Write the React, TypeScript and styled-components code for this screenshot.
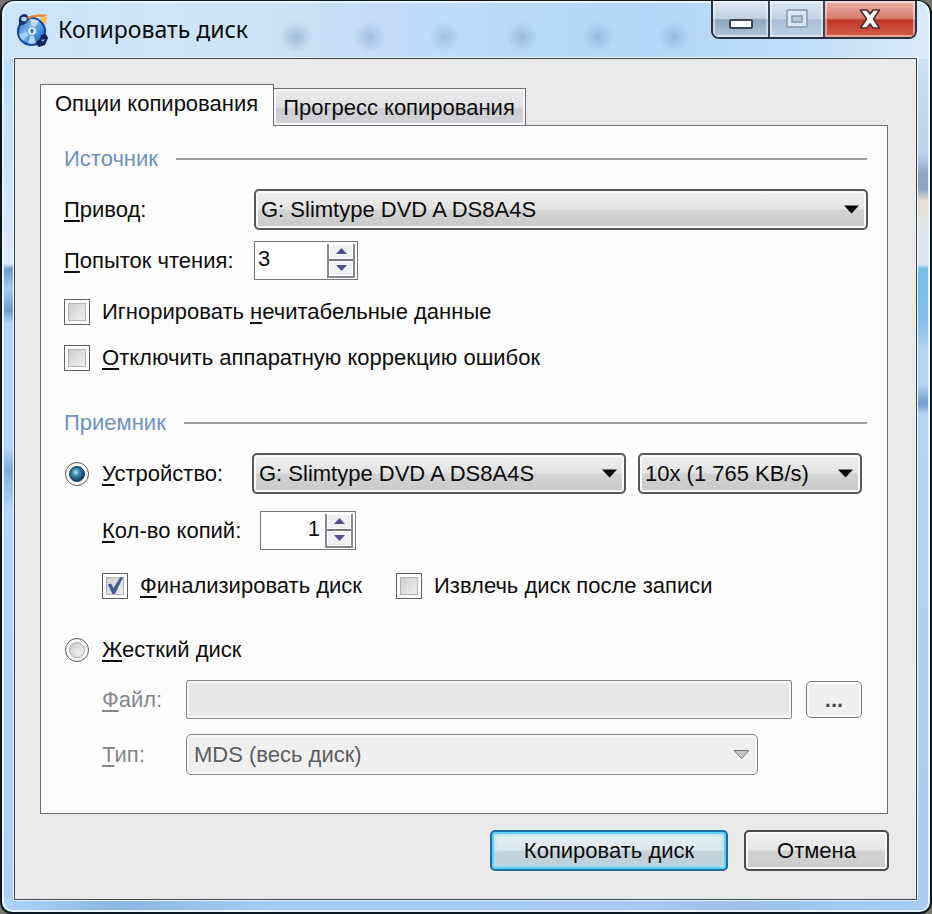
import React, { useId, useState } from "react";
import styled, { createGlobalStyle, css } from "styled-components";

const GlobalStyle = createGlobalStyle`
  *, *::before, *::after { box-sizing: border-box; }
  body {
    margin: 0;
    background: #77776f;
    font-family: "Liberation Sans", Arial, sans-serif;
    font-size: 22px;
    line-height: 28px;
    color: #0c0c0c;
  }
  button, input, select { font: inherit; color: inherit; margin: 0; }
`;

const Window = styled.main`
  display: flex;
  flex-direction: column;
  min-height: 100vh;
  padding: 0 13px 12px 12px;
  border: 2px solid #0d1822;
  border-top-width: 1px;
  border-radius: 14px 14px 12px 12px;
  box-shadow: inset 0 0 0 2px #e9f6ff;
  background:
    linear-gradient(90deg, #b0d6fa 0, #8fb4e0 12%, #a8cdf2 30%, #a9cdf2 65%, #9cc0e6 80%, #a9d0f4 100%) left bottom / 100% 14px no-repeat,
    linear-gradient(180deg, #cfe0ee 0, #b9d2ea 95px, #8ea6c4 115px, #8ea6c4 130px, #e8dfd0 142px, #dbe8f2 180px, #dbe8f2 205px, #74bfee 210px, #86bfe8 262px, #b2d5f6 292px, #b2d5f6 325px, #6f9cc8 345px, #b2d5f6 355px, #a6cdf0 100%) right 0 top 58px / 15px 100% no-repeat,
    linear-gradient(180deg, #bcdcf8 0, #dfe9f8 205px, #6c9ccc 210px, #a4ccf0 230px, #6c9ccc 252px, #b0d6fa 264px, #b0d6fa 390px, #7faedb 410px, #b0d6fa 450px, #a9d0f4 100%) left 0 top 58px / 15px 100% no-repeat,
    linear-gradient(90deg, #cbe5fb 0, #cfe3f6 25%, #c0dbf6 45%, #b3d6f8 70%, #c5e0f8 90%, #dcebf8 100%);
`;

const TitleBar = styled.header`
  display: flex;
  align-items: flex-start;
  height: 57px;
  padding-left: 2px;
  background:
    radial-gradient(circle at 282px 36px, rgba(95, 135, 180, 0.4), transparent 16px),
    radial-gradient(circle at 356px 36px, rgba(95, 135, 180, 0.35), transparent 16px),
    radial-gradient(circle at 430px 36px, rgba(95, 135, 180, 0.3), transparent 16px),
    radial-gradient(circle at 508px 36px, rgba(95, 135, 180, 0.35), transparent 16px),
    radial-gradient(circle at 584px 36px, rgba(95, 135, 180, 0.35), transparent 16px),
    radial-gradient(circle at 660px 36px, rgba(95, 135, 180, 0.35), transparent 16px);
`;

const AppIcon = styled.svg`
  width: 32px;
  height: 34px;
  margin-top: 12px;
`;

const Title = styled.h1`
  flex: 1;
  margin: 14px 0 0 10px;
  font: 400 23px/28px "Noto Sans", sans-serif;
`;

const CaptionButtons = styled.div`
  display: flex;
  height: 38px;
  border: 2px solid #26323e;
  border-top: 0;
  border-radius: 0 0 8px 8px;
  overflow: hidden;
`;

const CaptionButton = styled.button<{ $kind: "normal" | "disabled" | "close" }>`
  display: grid;
  place-items: center;
  width: ${(p) => (p.$kind === "close" ? 92 : 55)}px;
  padding: 0;
  border: 0;
  border-left: ${(p) => (p.$kind === "normal" ? "0" : "2px solid #3a4754")};
  background: ${(p) =>
    p.$kind === "close"
      ? "linear-gradient(#e8b5a9 0, #d9796b 50%, #bf3526 52%, #d5604c 100%)"
      : p.$kind === "disabled"
        ? "linear-gradient(#dbe7f2 0, #c3d3e4 50%, #a9bed4 52%, #bed1e5 100%)"
        : "linear-gradient(#dfe9f3 0, #c0cfdf 50%, #8da4bd 52%, #b1c5da 100%)"};
  box-shadow: inset 0 0 0 2px rgba(255, 255, 255, 0.45);
`;

const Client = styled.div`
  flex: 1;
  display: flex;
  flex-direction: column;
  padding: 25px 28px 27px 25px;
  border: 1px solid #3a4650;
  box-shadow: 0 0 0 1px #eef7fd;
  background: #e9e9e9;
`;

const TabList = styled.div`
  display: flex;
  align-items: flex-end;
`;

const Tab = styled.button<{ $active?: boolean }>`
  position: relative;
  border: 1px solid #6e6e72;
  border-bottom: 0;
  white-space: nowrap;
  ${(p) =>
    p.$active
      ? css`
          z-index: 1;
          height: 42px;
          margin-bottom: -1px;
          padding: 0 15px 4px 14px;
          background: #fdfdfe;
        `
      : css`
          height: 37px;
          padding: 2px 10px 0 9px;
          border-left: 0;
          box-shadow: inset 0 0 0 2px #f6f6f8;
          background: linear-gradient(#ececee 0, #e0e0e3 50%, #cdcdd1 55%, #d4d4d8 100%);
        `}
`;

const Panel = styled.form`
  display: flex;
  flex-direction: column;
  padding: 19px 19px 38px 23px;
  border: 1px solid #6e6e72;
  background: #fdfdfe;
`;

const SectionTitle = styled.h2<{ $spaced?: boolean }>`
  display: flex;
  align-items: center;
  gap: 18px;
  margin: ${(p) => (p.$spaced ? 38 : 0)}px 0 0;
  font-size: 22px;
  font-weight: 400;
  color: #6a93bf;
  &::after {
    content: "";
    flex: 1;
    height: 2px;
    margin-right: 1px;
    background: #9b9b9f;
  }
`;

const Row = styled.div<{ $top: number; $indent?: boolean; $inset?: boolean }>`
  display: flex;
  align-items: center;
  margin-top: ${(p) => p.$top}px;
  padding-left: ${(p) => (p.$indent ? 38 : 0)}px;
  padding-right: ${(p) => (p.$inset ? 6 : 0)}px;
`;

const FieldLabel = styled.label<{ $width: number; $muted?: boolean }>`
  flex: none;
  width: ${(p) => p.$width}px;
  color: ${(p) => (p.$muted ? "#858588" : "inherit")};
  white-space: nowrap;
`;

const Key = styled.span`
  text-decoration: underline;
  text-decoration-thickness: 2px;
  text-underline-offset: 3px;
  text-decoration-skip-ink: none;
`;

const SelectBox = styled.div<{ $width?: number; $gap?: number }>`
  display: grid;
  flex: ${(p) => (p.$width ? `0 0 ${p.$width}px` : "1 1 0")};
  min-width: 0;
  margin-left: ${(p) => p.$gap ?? 0}px;
  > * { grid-area: 1 / 1; }
`;

const NativeSelect = styled.select`
  appearance: none;
  width: 100%;
  height: 41px;
  padding: 0 40px 0 5px;
  border: 2px solid #59595c;
  border-radius: 5px;
  box-shadow: inset 0 0 0 2px #f8f8f8;
  background: linear-gradient(#efefef 0, #e3e3e3 48%, #d3d3d4 52%, #c8c8c9 100%);
  &:disabled {
    border: 1px solid #858588;
    padding-left: 7px;
    background: #efeff0;
    color: #5c5c60;
    opacity: 1;
  }
`;

const SelectArrow = styled.svg<{ $muted?: boolean }>`
  align-self: center;
  justify-self: end;
  width: 15px;
  height: 9px;
  margin-right: 9px;
  fill: ${(p) => (p.$muted ? "#c4c4c8" : "#050505")};
  stroke: ${(p) => (p.$muted ? "#77777b" : "none")};
  pointer-events: none;
`;

const SpinBox = styled.div<{ $width: number }>`
  display: flex;
  align-items: center;
  width: ${(p) => p.$width}px;
  height: 39px;
  padding: 2px;
  border: 1px solid #77777b;
  background: #fff;
`;

const SpinInput = styled.input<{ $end?: boolean }>`
  flex: 1;
  min-width: 0;
  height: 33px;
  padding: 0 5px 3px 1px;
  border: 0;
  outline: 0;
  background: none;
  text-align: ${(p) => (p.$end ? "right" : "left")};
  appearance: textfield;
  &::-webkit-inner-spin-button { appearance: none; margin: 0; }
`;

const SpinButtons = styled.div`
  display: grid;
  grid-template-rows: 15px 17px;
  width: 28px;
  border: 2px solid #88888c;
  border-top: 0;
`;

const SpinButton = styled.button`
  display: grid;
  place-items: center;
  padding: 0;
  border: 0;
  background: #f0f0f4;
  box-shadow: inset 0 0 0 1px #fff;
  & + & { border-top: 2px solid #77777b; }
`;

const Choice = styled.label<{ $gap?: number }>`
  display: flex;
  align-items: center;
  height: 26px;
  margin-left: ${(p) => p.$gap ?? 0}px;
  white-space: nowrap;
`;

const Mark = styled.span`
  display: grid;
  flex: none;
  width: 26px;
  margin-right: 12px;
  place-items: center;
  > * { grid-area: 1 / 1; }
`;

const CheckInput = styled.input`
  appearance: none;
  width: 26px;
  height: 26px;
  padding: 3px;
  border: 1px solid #5e5e62;
  background:
    linear-gradient(135deg, #cbcbcf, #f2f2f3) content-box,
    #fff;
  &::before {
    content: "";
    display: block;
    height: 100%;
    border: 1px solid #b2b2b6;
  }
`;

const RadioInput = styled.input`
  appearance: none;
  width: 24px;
  height: 24px;
  padding: 3px;
  border: 1px solid #55555a;
  border-radius: 50%;
  background: #fbfbfb;
  &::before {
    content: "";
    display: block;
    height: 100%;
    border: 1px solid #b0b0b4;
    border-radius: 50%;
    background: radial-gradient(circle at 65% 70%, #f0f0f0, #c8c8cc);
  }
  &:checked::before {
    border-color: #16344c;
    background: radial-gradient(circle at 42% 38%, #b8e2f0 0, #3f8fb4 28%, #17496b 65%, #0e2c44 100%);
  }
`;

const MarkGlyph = styled.svg`
  width: 18px;
  height: 20px;
  pointer-events: none;
`;

const FileInput = styled.input`
  flex: 1;
  min-width: 0;
  height: 39px;
  border: 1px solid #858588;
  border-radius: 2px;
  box-shadow: inset 0 0 0 2px #f6f6f6;
  background: #e8e8e9;
`;

const PushButton = styled.button<{ $variant?: "primary" | "small" }>`
  height: 41px;
  min-width: 145px;
  padding: 0 6px;
  border: 2px solid #4a4a4e;
  border-radius: 5px;
  box-shadow: inset 0 0 0 2px #f8f8f8;
  background: linear-gradient(#efefef 0, #e6e6e6 48%, #d2d2d3 52%, #cbcbcc 100%);
  ${(p) =>
    p.$variant === "primary" &&
    css`
      min-width: 238px;
      border-color: #1c6f9f;
      box-shadow: inset 0 0 0 2px #5fd0f4, inset 0 0 4px 3px #a9e4f6;
      background: linear-gradient(#e6f1f5 0, #dbe8ee 48%, #c3d2d9 52%, #bccdd5 100%);
    `}
  ${(p) =>
    p.$variant === "small" &&
    css`
      height: 37px;
      min-width: 56px;
      margin-left: 14px;
      border: 1px solid #77777b;
      background: #efeff0;
      color: #4c4c50;
      font-weight: 700;
    `}
`;

const Footer = styled.footer`
  display: flex;
  justify-content: flex-end;
  gap: 16px;
  margin: 16px -1px 0 0;
`;

function Arrow({ muted }: { muted?: boolean }) {
  return (
    <SelectArrow viewBox="0 0 15 9" $muted={muted} aria-hidden="true">
      <path d="M0 .5h15L7.500 8.500z" />
    </SelectArrow>
  );
}

type SelectProps = {
  id?: string;
  label?: string;
  options: string[];
  width?: number;
  gap?: number;
  disabled?: boolean;
};

function Select({ id, label, options, width, gap, disabled }: SelectProps) {
  return (
    <SelectBox $width={width} $gap={gap}>
      <NativeSelect id={id} aria-label={label} disabled={disabled}>
        {options.map((o) => (
          <option key={o}>{o}</option>
        ))}
      </NativeSelect>
      <Arrow muted={disabled} />
    </SelectBox>
  );
}

type SpinnerProps = { id: string; initial: number; width: number; end?: boolean };

function Spinner({ id, initial, width, end }: SpinnerProps) {
  const [value, setValue] = useState(initial);
  return (
    <SpinBox $width={width}>
      <SpinInput
        id={id}
        type="number"
        min={1}
        value={value}
        $end={end}
        onChange={(e) => setValue(Number(e.target.value))}
      />
      <SpinButtons>
        <SpinButton type="button" aria-label="Увеличить" onClick={() => setValue(value + 1)}>
          <svg width="13" height="8" viewBox="0 0 13 8">
            <path d="M1 7h11L6.500 1z" fill="#50508e" />
          </svg>
        </SpinButton>
        <SpinButton
          type="button"
          aria-label="Уменьшить"
          onClick={() => setValue(Math.max(1, value - 1))}
        >
          <svg width="13" height="8" viewBox="0 0 13 8">
            <path d="M1 1h11L6.500 7z" fill="#50508e" />
          </svg>
        </SpinButton>
      </SpinButtons>
    </SpinBox>
  );
}

type CheckProps = { children: React.ReactNode; initial?: boolean; gap?: number };

function Check({ children, initial = false, gap }: CheckProps) {
  const [checked, setChecked] = useState(initial);
  const id = useId();
  return (
    <Choice htmlFor={id} $gap={gap}>
      <Mark>
        <CheckInput
          id={id}
          type="checkbox"
          checked={checked}
          onChange={() => setChecked(!checked)}
        />
        {checked && (
          <MarkGlyph viewBox="0 0 18 20" aria-hidden="true">
            <path d="M2 8.500l3-1 2.500 4.500L14.500 1l2.500 .5L9 18H6.500z" fill="#475a94" />
          </MarkGlyph>
        )}
      </Mark>
      <span>{children}</span>
    </Choice>
  );
}

type RadioProps = { children: React.ReactNode; checked: boolean; onSelect: () => void };

function Radio({ children, checked, onSelect }: RadioProps) {
  const id = useId();
  return (
    <Choice htmlFor={id}>
      <Mark>
        <RadioInput id={id} type="radio" name="target" checked={checked} onChange={onSelect} />
      </Mark>
      <span>{children}</span>
    </Choice>
  );
}

const RadioColumn = styled.div`
  flex: none;
  width: 188px;
`;

function DiscIcon() {
  return (
    <AppIcon viewBox="0 0 32 34" aria-hidden="true">
      <defs>
        <linearGradient id="disc" x1="0" y1="0" x2="1" y2="1">
          <stop offset="0" stopColor="#1f5bb4" />
          <stop offset=".4" stopColor="#7db6ec" />
          <stop offset=".7" stopColor="#3f86d8" />
          <stop offset="1" stopColor="#153f96" />
        </linearGradient>
      </defs>
      <circle cx="15.500" cy="18.500" r="13.500" fill="url(#disc)" stroke="#17459c" strokeWidth="2.200" />
      <path d="M16 18 14 6a13 13 0 0 1 9 2z" fill="#d8eefc" opacity=".75" />
      <path d="M16 18 7 28a13 13 0 0 1-4-7z" fill="#a9d6f8" opacity=".8" />
      <path d="M16 18 12 30a13 13 0 0 0 8 0z" fill="#cfe9fb" opacity=".8" />
      <circle cx="16" cy="18" r="4.500" fill="#e2f3ff" stroke="#4a90dc" />
      <ellipse cx="16" cy="18" rx="1.600" ry="2.200" fill="#2c6cc0" />
      <path d="M3 9Q2 2 8 1q4 0 5 5l-4 5-6 2z" fill="#162f72" />
      <ellipse cx="8" cy="6" rx="2.800" ry="2.300" fill="#b4d6f4" />
      <path d="M11 4Q20 0 32 2l-5 2Q18 3 12 6z" fill="#e98a24" />
      <path d="M23 6l8-3-1 9-3-3z" fill="#f6b94e" />
      <path d="M21 28l3-2 1-4 5-1 2 4-3 7-6 2-3-3z" fill="#13245c" />
      <path d="M25 27l4-1-2 3z" fill="#7fa8e0" />
    </AppIcon>
  );
}

export default function App() {
  const [target, setTarget] = useState<"device" | "disk">("device");
  return (
    <>
      <GlobalStyle />
      <Window>
        <TitleBar>
          <DiscIcon />
          <Title>Копировать диск</Title>
          <CaptionButtons>
            <CaptionButton type="button" $kind="normal" aria-label="Свернуть">
              <svg width="24" height="36" viewBox="0 0 24 36">
                <rect x="1" y="19" width="22" height="8" rx="1" fill="#fff" stroke="#3c4650" strokeWidth="2" />
              </svg>
            </CaptionButton>
            <CaptionButton type="button" $kind="disabled" aria-label="Развернуть" disabled>
              <svg width="22" height="20" viewBox="0 0 22 20">
                <rect x="1" y="1" width="20" height="17" rx="1" fill="#dce7f1" stroke="#8497aa" strokeWidth="1.500" />
                <rect x="6" y="7" width="10" height="6" fill="#bccbdb" stroke="#8497aa" strokeWidth="1.500" />
              </svg>
            </CaptionButton>
            <CaptionButton type="button" $kind="close" aria-label="Закрыть">
              <svg width="22" height="20" viewBox="0 0 22 20">
                <path
                  d="M1.500 1H8l3 4 3-4h6.500l-6 9 6 9H14l-3-4-3 4H1.500l6-9z"
                  fill="#fafafa"
                  stroke="#502e30"
                  strokeWidth="1.600"
                  strokeLinejoin="round"
                />
              </svg>
            </CaptionButton>
          </CaptionButtons>
        </TitleBar>

        <Client>
          <TabList role="tablist">
            <Tab type="button" role="tab" aria-selected="true" $active>
              Опции копирования
            </Tab>
            <Tab type="button" role="tab" aria-selected="false">
              Прогресс копирования
            </Tab>
          </TabList>

          <Panel id="copy" onSubmit={(e) => e.preventDefault()}>
            <SectionTitle>Источник</SectionTitle>
            <Row $top={16}>
              <FieldLabel htmlFor="drive" $width={190}>
                <Key>П</Key>ривод:
              </FieldLabel>
              <Select id="drive" options={["G: Slimtype DVD A DS8A4S"]} />
            </Row>
            <Row $top={11}>
              <FieldLabel htmlFor="retries" $width={190}>
                <Key>П</Key>опыток чтения:
              </FieldLabel>
              <Spinner id="retries" initial={3} width={104} />
            </Row>
            <Row $top={19}>
              <Check>
                Игнорировать <Key>н</Key>ечитабельные данные
              </Check>
            </Row>
            <Row $top={20}>
              <Check>
                <Key>О</Key>тключить аппаратную коррекцию ошибок
              </Check>
            </Row>

            <SectionTitle $spaced>Приемник</SectionTitle>
            <Row $top={16} $inset>
              <RadioColumn>
                <Radio checked={target === "device"} onSelect={() => setTarget("device")}>
                  <Key>У</Key>стройство:
                </Radio>
              </RadioColumn>
              <Select label="Устройство" options={["G: Slimtype DVD A DS8A4S"]} />
              <Select label="Скорость" options={["10x (1 765 KB/s)"]} width={224} gap={12} />
            </Row>
            <Row $top={17} $indent>
              <FieldLabel htmlFor="copies" $width={158}>
                <Key>К</Key>ол-во копий:
              </FieldLabel>
              <Spinner id="copies" initial={1} width={96} end />
            </Row>
            <Row $top={23} $indent>
              <Check initial>
                <Key>Ф</Key>инализировать диск
              </Check>
              <Check gap={34}>Извлечь диск после записи</Check>
            </Row>
            <Row $top={38}>
              <Radio checked={target === "disk"} onSelect={() => setTarget("disk")}>
                <Key>Ж</Key>есткий диск
              </Radio>
            </Row>
            <Row $top={17} $indent $inset>
              <FieldLabel htmlFor="file" $width={84} $muted>
                <Key>Ф</Key>айл:
              </FieldLabel>
              <FileInput id="file" type="text" disabled />
              <PushButton type="button" $variant="small" disabled>
                ...
              </PushButton>
            </Row>
            <Row $top={15} $indent>
              <FieldLabel htmlFor="type" $width={84} $muted>
                <Key>Т</Key>ип:
              </FieldLabel>
              <Select id="type" options={["MDS (весь диск)"]} width={572} disabled />
            </Row>
          </Panel>

          <Footer>
            <PushButton type="submit" form="copy" $variant="primary">
              Копировать диск
            </PushButton>
            <PushButton type="button">Отмена</PushButton>
          </Footer>
        </Client>
      </Window>
    </>
  );
}
